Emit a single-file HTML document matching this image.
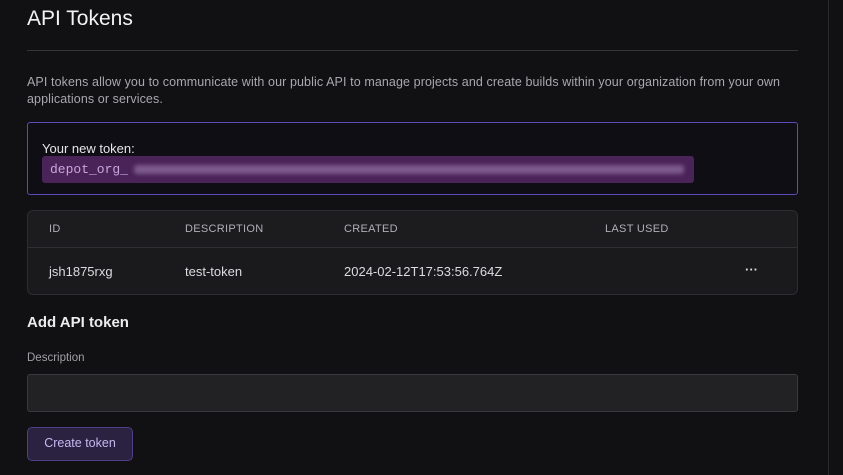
<!DOCTYPE html>
<html><head><style>
*{margin:0;padding:0;box-sizing:border-box}
body{width:843px;height:475px;background:#111113;font-family:"Liberation Sans",sans-serif;color:#ededef;position:relative;overflow:hidden}
.a{position:absolute;white-space:nowrap}
</style></head><body>
<div class="a" style="left:828px;top:0;width:1px;height:475px;background:#2a2a2d"></div>
<div class="a" style="left:27px;top:7px;font-size:21px;color:#f2f2f4">API Tokens</div>
<div class="a" style="left:27px;top:50px;width:771px;height:1px;background:#353538"></div>
<div class="a" style="left:27px;top:74px;font-size:12.5px;line-height:17px;color:#a8a8ad;letter-spacing:0.1px">API tokens allow you to communicate with our public API to manage projects and create builds within your organization from your own<br>applications or services.</div>
<div class="a" style="left:27px;top:122px;width:771px;height:73px;border:1px solid #5b4bbd;border-radius:3px;background:#0f0e14"></div>
<div class="a" style="left:42px;top:141px;font-size:13px;color:#e6e6ea">Your new token:</div>
<div class="a" style="left:42px;top:156px;width:652px;height:27px;background:#4a2358;border-radius:3px"></div>
<div class="a" style="left:50px;top:162px;font-family:'Liberation Mono',monospace;font-size:13px;color:#c8a6e0">depot_org_</div>
<div class="a" style="left:134px;top:165px;width:550px;height:9px;background:#7d5a8e;filter:blur(2px);border-radius:3px"></div>
<div class="a" style="left:27px;top:210px;width:771px;height:85px;border:1px solid #2d2d31;border-radius:6px;background:#1c1c1f"></div>
<div class="a" style="left:28px;top:247px;width:769px;height:1px;background:#303034"></div>
<div class="a" style="left:28px;top:248px;width:769px;height:46px;background:#1a1a1d;border-radius:0 0 6px 6px"></div>
<div class="a" style="left:49px;top:223px;font-size:11px;color:#b0b0b5;letter-spacing:.3px">ID</div>
<div class="a" style="left:185px;top:223px;font-size:11px;color:#b0b0b5;letter-spacing:.3px">DESCRIPTION</div>
<div class="a" style="left:344px;top:223px;font-size:11px;color:#b0b0b5;letter-spacing:.3px">CREATED</div>
<div class="a" style="left:605px;top:223px;font-size:11px;color:#b0b0b5;letter-spacing:.3px">LAST USED</div>
<div class="a" style="left:49px;top:264px;font-size:13px;color:#dcdce0">jsh1875rxg</div>
<div class="a" style="left:185px;top:264px;font-size:13px;color:#dcdce0">test-token</div>
<div class="a" style="left:344px;top:264px;font-size:13px;color:#dcdce0">2024-02-12T17:53:56.764Z</div>
<div class="a" style="left:745px;top:262px;font-size:13px;color:#dcdce0;font-weight:bold">···</div>
<div class="a" style="left:27px;top:314px;font-size:15px;font-weight:bold;color:#ececef">Add API token</div>
<div class="a" style="left:27px;top:352px;font-size:11.5px;color:#a0a0a5">Description</div>
<div class="a" style="left:27px;top:374px;width:771px;height:38px;background:#222225;border:1px solid #3a3a3e;border-radius:3px"></div>
<div class="a" style="left:27px;top:427px;width:106px;height:34px;background:#2b2242;border:1px solid #4f3f86;border-radius:5px"></div>
<div class="a" style="left:27px;top:436px;width:106px;text-align:center;font-size:12.5px;color:#c4b8f2">Create token</div>
</body></html>
